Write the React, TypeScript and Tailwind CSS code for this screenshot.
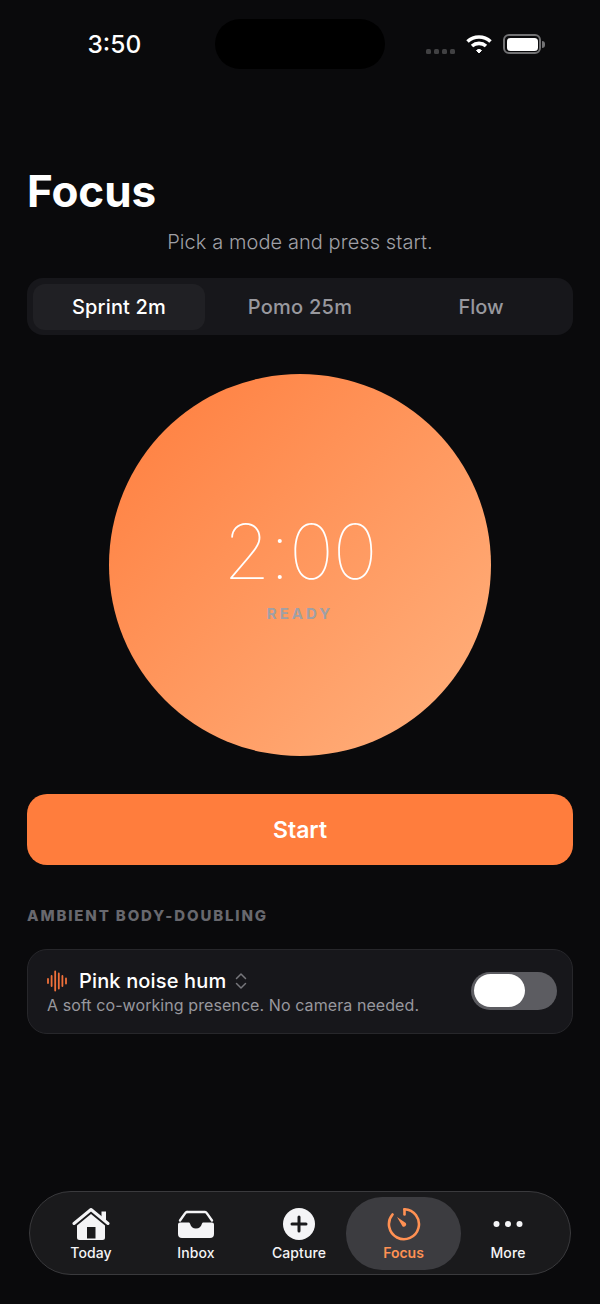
import React from "react";

const Home = () => (
  <svg width="38" height="34" viewBox="0 0 38 34" fill="none">
    <path d="M2 16.5 L19 2.5 L36 16.5" stroke="#f4f4f6" strokeWidth="3" strokeLinecap="round" strokeLinejoin="round" />
    <path d="M29.5 4.5h4.5v9L29.5 10z" fill="#f4f4f6" />
    <path fillRule="evenodd" clipRule="evenodd" d="M19 7 L33 18.5 V30.5 a2.5 2.5 0 0 1 -2.5 2.5 H7.5 A2.5 2.5 0 0 1 5 30.5 V18.5 Z M15 20 h8.5 v11.5 h-8.5 Z" fill="#f4f4f6" />
  </svg>
);

const Inbox = () => (
  <svg width="38" height="28" viewBox="0 0 38 28" fill="none">
    <path d="M10 2h18a2 2 0 0 1 1.6.9L35 10.5" stroke="#f4f4f6" strokeWidth="2.4" strokeLinecap="round" />
    <path d="M10 2a2 2 0 0 0-1.6.9L3 10.5" stroke="#f4f4f6" strokeWidth="2.4" strokeLinecap="round" />
    <path d="M1 14.5 a2 2 0 0 1 2-2 h8.5 c1 0 1.5.6 1.7 1.5 .6 2.6 2.6 4.5 5.8 4.5 s5.2-1.9 5.8-4.5 c.2-.9.7-1.5 1.7-1.5 H35 a2 2 0 0 1 2 2 V24 a4 4 0 0 1-4 4 H5 a4 4 0 0 1-4-4 Z" fill="#f4f4f6" />
  </svg>
);

const Capture = () => (
  <svg width="32" height="32" viewBox="0 0 32 32">
    <circle cx="16" cy="16" r="16" fill="#f4f4f6" />
    <path d="M16 9v14M9 16h14" stroke="#1a1a1d" strokeWidth="3" strokeLinecap="round" />
  </svg>
);

const Timer = () => (
  <svg width="34" height="34" viewBox="0 0 34 34" fill="none">
    <path d="M17.5 2.2 A15 15 0 1 1 5.5 7.5" stroke="#ff9153" strokeWidth="2.6" strokeLinecap="round" />
    <path d="M17.5 2.2 V7.5" stroke="#ff9153" strokeWidth="2.6" strokeLinecap="round" />
    <path d="M10 10 L18.8 16 A2.4 2.4 0 0 1 15.6 19.4 Z" fill="#ff9153" />
  </svg>
);

const Dots = () => (
  <svg width="30" height="8" viewBox="0 0 30 8">
    <circle cx="3.5" cy="4" r="3" fill="#f4f4f6" />
    <circle cx="15" cy="4" r="3" fill="#f4f4f6" />
    <circle cx="26.5" cy="4" r="3" fill="#f4f4f6" />
  </svg>
);

const Wave = () => (
  <svg width="20" height="22" viewBox="0 0 20 22" stroke="#f0703a" strokeWidth="1.8" strokeLinecap="round">
    <path d="M1 9v4M4.6 6v10M8.2 1.5v19M11.8 3.5v15M15.4 6v10M19 8.5v5" />
  </svg>
);

const tabs = [
  { label: "Today", icon: <Home />, w: "w-[106px]" },
  { label: "Inbox", icon: <Inbox />, w: "w-[104px]" },
  { label: "Capture", icon: <Capture />, w: "w-[102px] mr-[-4px]" },
  { label: "Focus", icon: <Timer />, w: "w-[115px]", active: true },
  { label: "More", icon: <Dots />, w: "w-[94px]" },
];

export default function App() {
  return (
    <div className="relative flex h-[1304px] w-[600px] flex-col overflow-hidden bg-[#0a0a0c] font-['Inter',sans-serif] text-white">
      <div className="relative flex h-[88px] items-start">
        <span className="absolute left-[87.5px] top-[29px] text-[24.5px] leading-[30px] font-medium">3:50</span>
        <div className="absolute left-[215px] top-[19px] h-[50px] w-[170px] rounded-[25px] bg-black" />
        <div className="absolute left-[426px] top-[48.5px] flex gap-[3px]">
          <i className="h-[5px] w-[5px] rounded-[1.5px] bg-[#414143]" />
          <i className="h-[5px] w-[5px] rounded-[1.5px] bg-[#414143]" />
          <i className="h-[5px] w-[5px] rounded-[1.5px] bg-[#414143]" />
          <i className="h-[5px] w-[5px] rounded-[1.5px] bg-[#414143]" />
        </div>
        <svg className="absolute left-[466px] top-[34px]" width="26" height="20" viewBox="0 0 26 20" fill="none" stroke="#fff" strokeWidth="3.6">
          <path d="M1.5 7.5 C8 1.5 18 1.5 24.5 7.5" />
          <path d="M6 12 C10 8.5 16 8.5 20 12" />
          <path d="M10.5 16.5 L13 19 L15.5 16.5 C14 15 12 15 10.5 16.5Z" fill="#fff" strokeWidth="1" />
        </svg>
        <div className="absolute left-[503px] top-[34px] flex items-center gap-[1px]">
          <div className="h-[20px] w-[38px] rounded-[6px] border-2 border-[#727274] p-[1.5px]">
            <div className="h-full w-full rounded-[3.5px] bg-white" />
          </div>
          <div className="h-[7px] w-[3px] rounded-r-full bg-[#727274]" />
        </div>
      </div>

      <main className="flex flex-1 flex-col px-[27px]">
        <h1 className="mt-[77px] text-[44px] leading-[53px] font-bold tracking-[-0.1px]">Focus</h1>
        <p className="mt-[12px] text-center text-[20px] leading-[24px] font-light tracking-[0.08px] text-[#a0a0a6]">Pick a mode and press start.</p>

        <div className="mt-[24px] flex h-[57px] gap-[9px] rounded-[16px] bg-[#17171b] px-[6px] py-[5.5px]">
          <div className="flex flex-1 items-center justify-center rounded-[12px] bg-[#202024] text-[20px] font-[550] tracking-[0.15px]">Sprint 2m</div>
          <div className="flex flex-1 items-center justify-center text-[20px] font-[550] tracking-[0.25px] text-[#98989e]">Pomo 25m</div>
          <div className="flex flex-1 items-center justify-center text-[20px] font-[550] text-[#98989e]">Flow</div>
        </div>

        <div className="mx-auto mt-[39px] flex h-[382px] w-[382px] flex-col items-center rounded-full bg-[linear-gradient(135deg,#ff7d3d,#ffb27f)]">
          <div className="mt-[129px] text-[76px] leading-[96px] font-thin tracking-[-1px]">2:00</div>
          <div className="mt-[6px] text-[15px] leading-[18px] font-bold tracking-[3px] text-[#a0a0a6]">READY</div>
        </div>

        <button className="mt-[38px] flex h-[71px] items-center justify-center rounded-[20px] bg-[#ff7d3d] pt-[1px] text-[23px] font-semibold">Start</button>

        <h2 className="mt-[42px] text-[15px] leading-[17px] font-extrabold tracking-[1.85px] text-[#68686e]">AMBIENT BODY-DOUBLING</h2>

        <div className="mt-[25px] flex h-[85px] items-center rounded-[20px] border border-[#27272b] bg-[#17171b] pr-[15px] pl-[19px]">
          <div className="flex-1">
            <div className="flex items-center">
              <Wave />
              <span className="ml-[12px] text-[20px] leading-[24px] font-medium tracking-[0.15px]">Pink noise hum</span>
              <svg className="ml-[9px]" width="12" height="18" viewBox="0 0 12 18" fill="none" stroke="#77777c" strokeWidth="1.5" strokeLinecap="round" strokeLinejoin="round">
                <path d="M1.5 6.5 L6 2 L10.5 6.5M1.5 11.5 L6 16 L10.5 11.5" />
              </svg>
            </div>
            <p className="mt-[2px] text-[16px] leading-[20px] tracking-[0.08px] text-[#98989e]">A soft co-working presence. No camera needed.</p>
          </div>
          <div className="mb-[2px] h-[38px] w-[86px] rounded-full bg-[#5c5c61] p-[2.5px]">
            <div className="h-[33px] w-[51px] rounded-full bg-white" />
          </div>
        </div>
      </main>

      <nav className="mx-[29px] mb-[29px] flex h-[84px] items-center rounded-[42px] border border-[#3a3a3d] bg-[#1a1a1c] pr-[9px] pl-[8px]">
        {tabs.map((t) => (
          <div key={t.label} className={`${t.w} flex h-[73px] flex-col items-center rounded-[36px] ${t.active ? "bg-[#3c3c40]" : ""}`}>
            <div className="mt-[10px] flex h-[35px] items-center justify-center">{t.icon}</div>
            <span className={`mt-[2px] text-[14px] leading-[17px] ${t.active ? "font-semibold text-[#ff9153]" : "font-[450] tracking-[0.1px] text-[#f4f4f6]"}`}>{t.label}</span>
          </div>
        ))}
      </nav>
    </div>
  );
}
